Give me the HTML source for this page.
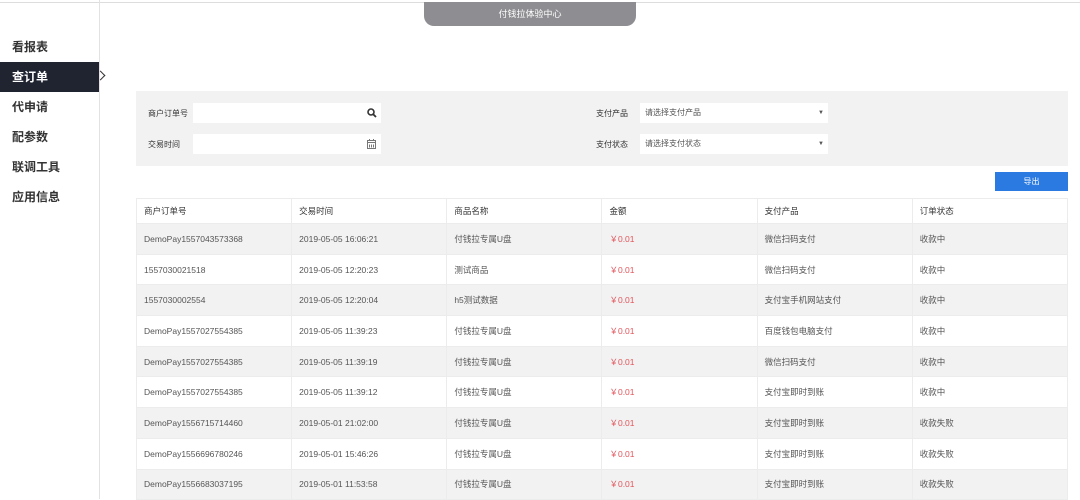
<!DOCTYPE html>
<html><head><meta charset="utf-8"><style>
*{margin:0;padding:0;box-sizing:border-box}
body{width:1080px;height:499px;overflow:hidden;background:#fff;font-family:"Liberation Sans","Noto Sans CJK SC",sans-serif;color:#555;position:relative}
.topline{position:absolute;left:0;top:2px;width:1080px;height:1px;background:#ddd}
.side{position:absolute;left:0;top:0;width:100px;height:499px;border-right:1px solid #e2e2e2}
.nav{position:absolute;left:0;width:99px;height:30px;line-height:30px;padding-left:12px;font-size:12px;font-weight:bold;color:#333}
.nav.act{background:#1f2430;color:#fff}
.arrow{position:absolute;left:97px;top:72px;width:7px;height:7px;border-top:1px solid #333;border-right:1px solid #333;transform:rotate(45deg)}
.tab{position:absolute;left:424px;top:2px;width:212px;height:24px;background:#8e8e92;border-radius:0 0 10px 10px;color:#fff;font-size:9px;text-align:center;line-height:24px}
.panel{position:absolute;left:136px;top:91px;width:932px;height:75px;background:#f2f2f2}
.lbl{position:absolute;font-size:8px;color:#333}
.inp{position:absolute;background:#fff;height:20px;font-size:8px;color:#555;line-height:20px;padding-left:5px}
.btn{position:absolute;left:995px;top:172px;width:73px;height:19px;background:#2a7ae2;color:#fff;font-size:8px;text-align:center;line-height:19px}
table{position:absolute;left:136px;top:198px;width:932px;border-collapse:collapse;table-layout:fixed}
td{border:1px solid #ececec;height:30.7px;font-size:8.5px;padding-left:7px;color:#555;white-space:nowrap}
tr.h td{height:25px;color:#333}
tr.g td{background:#f2f2f2}
.r{color:#e2545b}
</style></head><body>
<div class="topline"></div>
<div class="side">
<div class="nav" style="top:32px">看报表</div>
<div class="nav act" style="top:62px">查订单</div>
<div class="nav" style="top:92px">代申请</div>
<div class="nav" style="top:122px">配参数</div>
<div class="nav" style="top:152px">联调工具</div>
<div class="nav" style="top:182px">应用信息</div>
</div>
<div class="arrow"></div>
<div class="tab">付钱拉体验中心</div>
<div class="panel"></div>
<div class="lbl" style="left:148px;top:108px">商户订单号</div>
<div class="inp" style="left:193px;top:103px;width:188px"><svg style="position:absolute;right:4px;top:5px" width="10" height="10" viewBox="0 0 10 10"><circle cx="4" cy="4" r="3" fill="none" stroke="#333" stroke-width="1.6"/><path d="M6.2 6.2L9 9" stroke="#333" stroke-width="1.8"/></svg></div>
<div class="lbl" style="left:148px;top:139px">交易时间</div>
<div class="inp" style="left:193px;top:134px;width:188px"><svg style="position:absolute;right:5px;top:5px" width="9" height="10" viewBox="0 0 9 10"><rect x="0.5" y="1.5" width="8" height="8" fill="none" stroke="#777"/><path d="M0.5 3.5h8M2.5 0v2M6.5 0v2M2.5 5.5v3M4.5 5.5v3M6.5 5.5v3" stroke="#777"/></svg></div>
<div class="lbl" style="left:596px;top:108px">支付产品</div>
<div class="inp" style="left:640px;top:103px;width:188px">请选择支付产品<span style="position:absolute;right:4px;font-size:6px">▼</span></div>
<div class="lbl" style="left:596px;top:139px">支付状态</div>
<div class="inp" style="left:640px;top:134px;width:188px">请选择支付状态<span style="position:absolute;right:4px;font-size:6px">▼</span></div>
<div class="btn">导出</div>
<table>
<tr class="h"><td>商户订单号</td><td>交易时间</td><td>商品名称</td><td>金额</td><td>支付产品</td><td>订单状态</td></tr>
<tr class="g"><td>DemoPay1557043573368</td><td>2019-05-05 16:06:21</td><td>付钱拉专属U盘</td><td class="r">￥0.01</td><td>微信扫码支付</td><td>收款中</td></tr>
<tr><td>1557030021518</td><td>2019-05-05 12:20:23</td><td>测试商品</td><td class="r">￥0.01</td><td>微信扫码支付</td><td>收款中</td></tr>
<tr class="g"><td>1557030002554</td><td>2019-05-05 12:20:04</td><td>h5测试数据</td><td class="r">￥0.01</td><td>支付宝手机网站支付</td><td>收款中</td></tr>
<tr><td>DemoPay1557027554385</td><td>2019-05-05 11:39:23</td><td>付钱拉专属U盘</td><td class="r">￥0.01</td><td>百度钱包电脑支付</td><td>收款中</td></tr>
<tr class="g"><td>DemoPay1557027554385</td><td>2019-05-05 11:39:19</td><td>付钱拉专属U盘</td><td class="r">￥0.01</td><td>微信扫码支付</td><td>收款中</td></tr>
<tr><td>DemoPay1557027554385</td><td>2019-05-05 11:39:12</td><td>付钱拉专属U盘</td><td class="r">￥0.01</td><td>支付宝即时到账</td><td>收款中</td></tr>
<tr class="g"><td>DemoPay1556715714460</td><td>2019-05-01 21:02:00</td><td>付钱拉专属U盘</td><td class="r">￥0.01</td><td>支付宝即时到账</td><td>收款失败</td></tr>
<tr><td>DemoPay1556696780246</td><td>2019-05-01 15:46:26</td><td>付钱拉专属U盘</td><td class="r">￥0.01</td><td>支付宝即时到账</td><td>收款失败</td></tr>
<tr class="g"><td>DemoPay1556683037195</td><td>2019-05-01 11:53:58</td><td>付钱拉专属U盘</td><td class="r">￥0.01</td><td>支付宝即时到账</td><td>收款失败</td></tr>
</table>
</body></html>
